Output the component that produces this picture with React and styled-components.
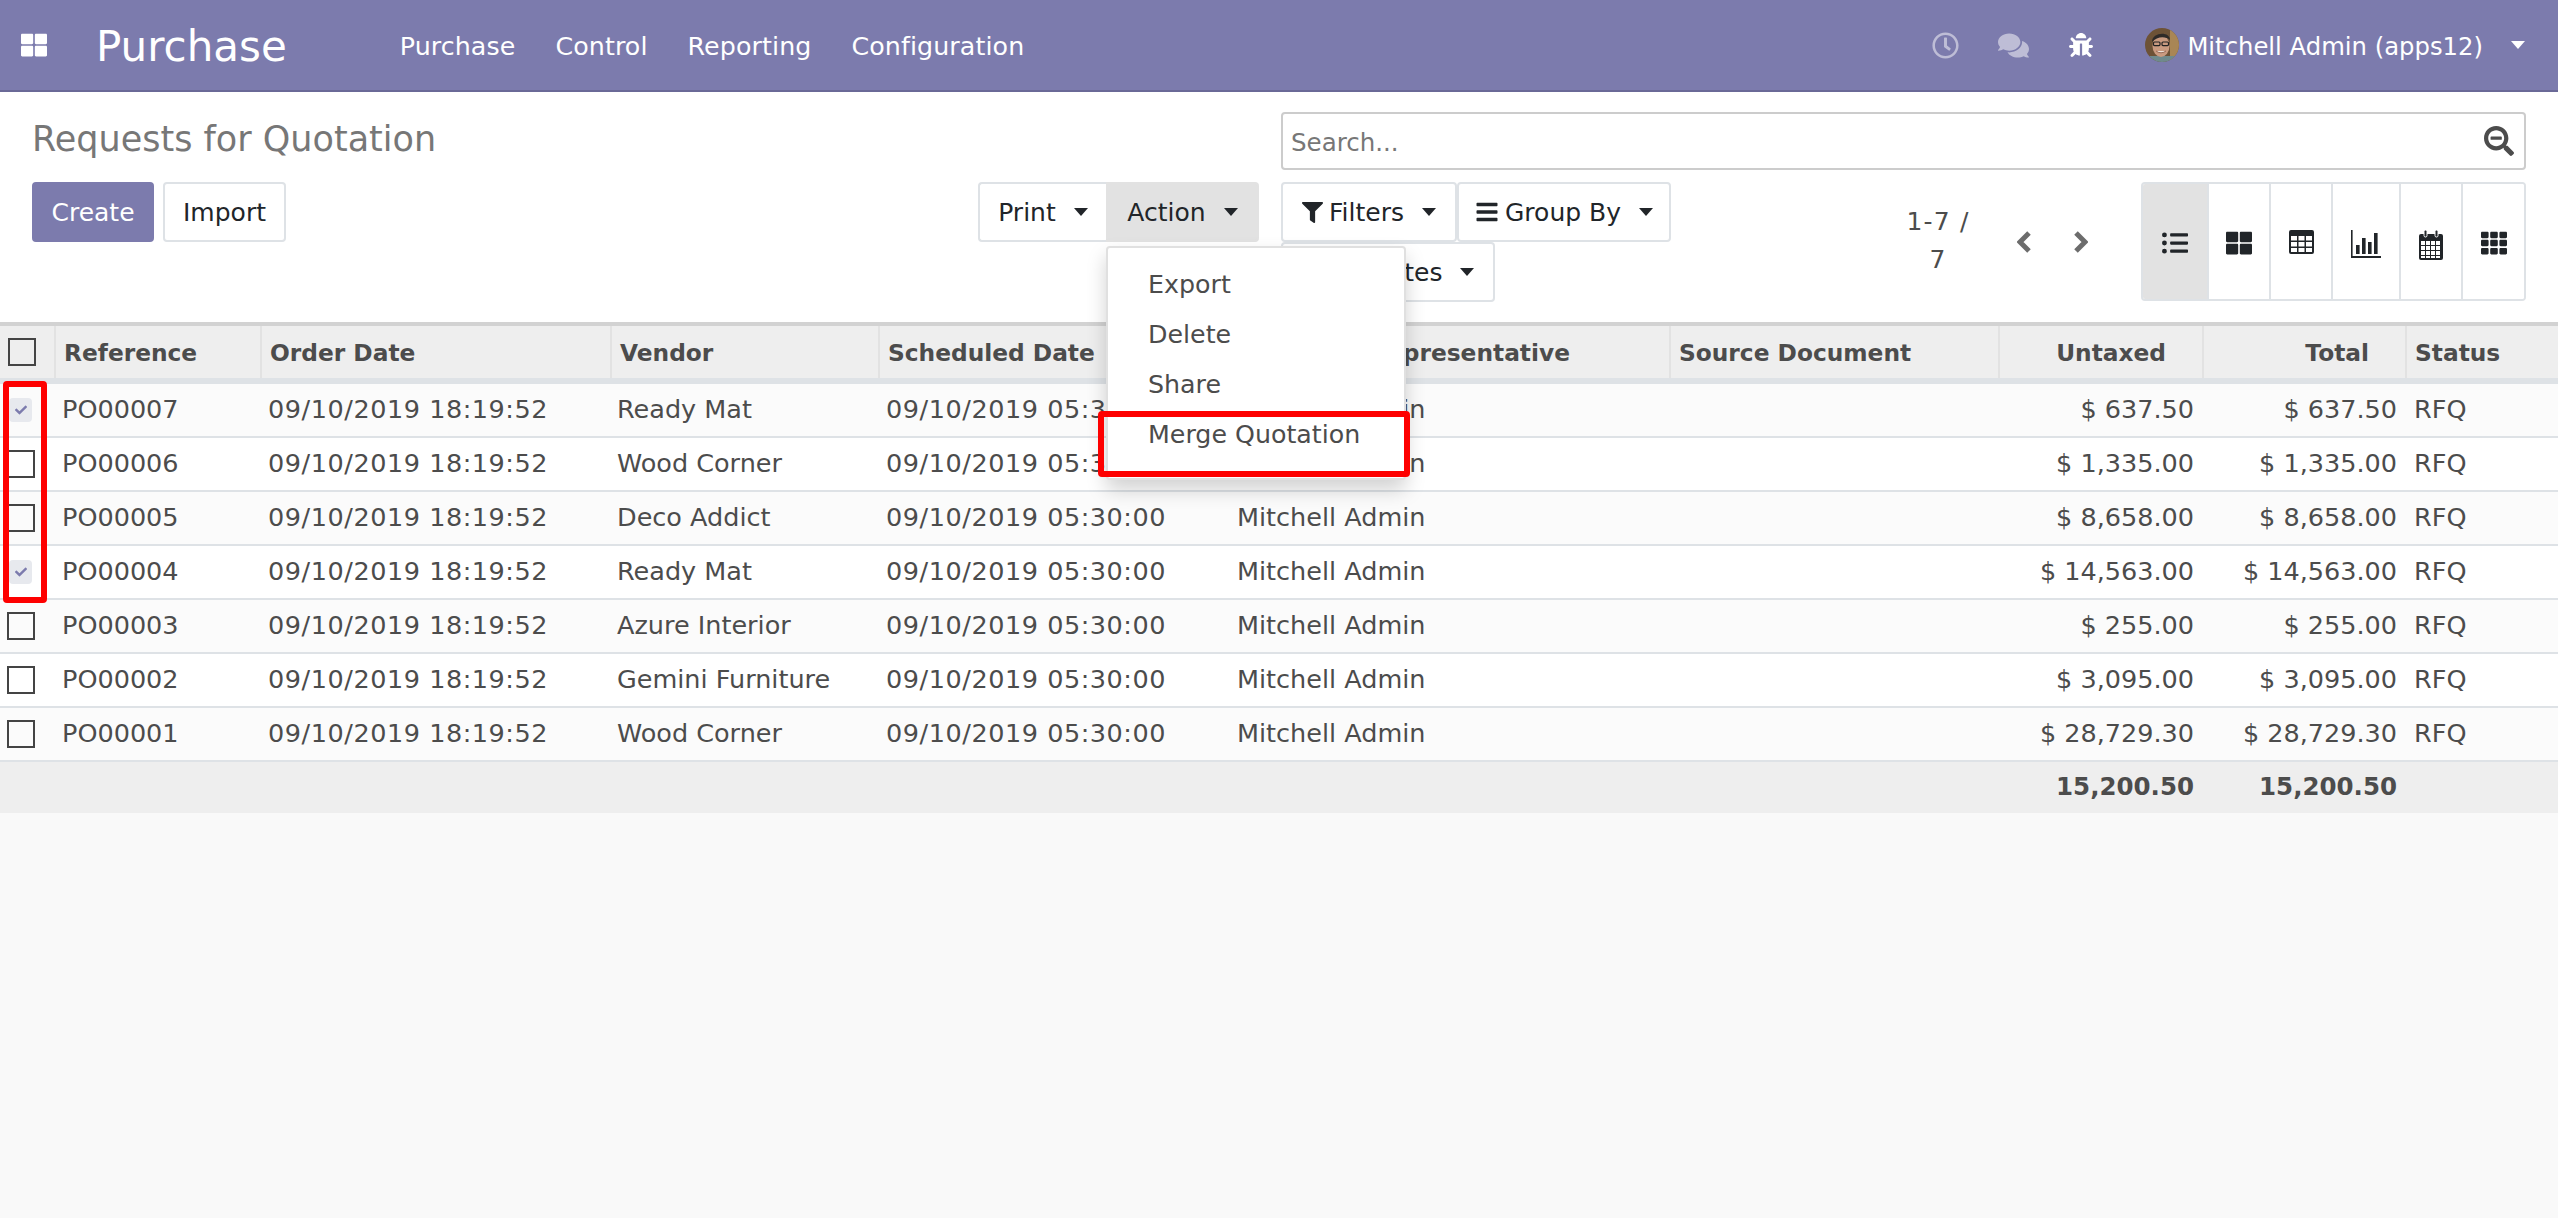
import React from 'react';
import styled, { createGlobalStyle } from 'styled-components';
import { FaThLarge, FaRegClock, FaComments, FaBug, FaFilter, FaBars, FaListUl, FaTh, FaSearchMinus, FaCheck, FaStar } from 'react-icons/fa';

const Global = createGlobalStyle`
    html, body {
        margin: 0;
        height: 100%;
        overflow: hidden;
        background: #f9f9f9;
        font-family: "DejaVu Sans", sans-serif;
        color: #4c4c4c;
    }
`;

const Page = styled.div`
    min-height: 1218px;
    background: #f9f9f9;
`;

const Navbar = styled.header`
    height: 92px;
    box-sizing: border-box;
    background: #7c7bad;
    border-bottom: 2px solid #6a6997;
    display: flex;
    align-items: center;
    padding: 0 33px 0 21px;
    color: #fff;
`;

const AppsIcon = styled(FaThLarge)`
    font-size: 26px;
    margin-right: 49px;
`;

const Brand = styled.div`
    font-size: 42px;
    margin-right: 113px;
    padding-top: 2px;
`;

const NavMenu = styled.nav`
    display: flex;
    gap: 40px;
    font-size: 25.3px;
    letter-spacing: 0.1px;
    padding-top: 2px;
`;

const NavRight = styled.div`
    margin-left: auto;
    display: flex;
    align-items: center;
`;

const NavIcon = styled.span`
    display: flex;
    font-size: ${p => p.$size}px;
    opacity: ${p => p.$dim ? 0.5 : 1};
    margin-right: ${p => p.$gap}px;
`;

const UserName = styled.span`
    font-size: 24.3px;
    margin-left: 8px;
    padding-top: 2px;
`;

const Caret = styled.span`
    display: inline-block;
    width: 0;
    height: 0;
    border-left: 7px solid transparent;
    border-right: 7px solid transparent;
    border-top: 8px solid ${p => p.$color || '#212529'};
    margin-left: ${p => p.$gap || 12}px;
    vertical-align: 4px;
`;

const ControlPanel = styled.section`
    height: 230px;
    box-sizing: border-box;
    background: #fff;
    padding: 20px 32px 0;
    display: grid;
    grid-template-columns: 1227px 1245px;
    grid-template-rows: 58px auto;
    column-gap: 22px;
    row-gap: 12px;
`;

const Title = styled.h1`
    margin: 0;
    font-size: 35px;
    font-weight: 400;
    color: #777;
    line-height: 58px;
    margin-top: -2px;
`;

const SearchBox = styled.div`
    box-sizing: border-box;
    height: 58px;
    border: 2px solid #ccc;
    border-radius: 4px;
    display: flex;
    align-items: center;
    justify-content: space-between;
    padding: 0 10px 0 8px;
    font-size: 24.5px;
    color: #777;
    & > span {
        padding-top: 2px;
    }
`;

const SearchIcon = styled(FaSearchMinus)`
    font-size: 30px;
    color: #4c4c4c;
`;

const LeftTools = styled.div`
    display: flex;
    justify-content: space-between;
    align-items: flex-start;
`;

const ButtonRow = styled.div`
    display: flex;
    gap: 9px;
`;

const Button = styled.button`
    box-sizing: border-box;
    height: 60px;
    width: ${p => p.$w}px;
    padding: 0;
    font: inherit;
    font-size: 25px;
    border-radius: 4px;
    color: ${p => p.$primary ? '#fff' : '#212529'};
    background: ${p => p.$primary ? '#7c7bad' : p.$active ? '#e2e2e2' : '#fff'};
    border: 2px solid ${p => p.$primary ? '#7c7bad' : p.$active ? '#e2e2e2' : '#dee2e6'};
    display: flex;
    align-items: center;
    justify-content: center;
    gap: 6px;
`;

const ActionGroup = styled.div`
    position: relative;
    display: flex;
    & > button:first-child {
        border-radius: 4px 0 0 4px;
        border-right: 0;
    }
    & > button:nth-child(2) {
        border-radius: 0 4px 4px 0;
    }
`;

const Dropdown = styled.ul`
    position: absolute;
    z-index: 5;
    top: 64px;
    left: 128px;
    width: 300px;
    box-sizing: border-box;
    margin: 0;
    padding: 12px 0 18px;
    list-style: none;
    background: #fff;
    border: 2px solid rgba(0, 0, 0, 0.12);
    border-radius: 4px;
    box-shadow: 0 10px 20px rgba(0, 0, 0, 0.18);
    font-size: 25.3px;
`;

const DropdownItem = styled.li`
    height: 50px;
    line-height: 50px;
    padding-left: 40px;
    color: #4c4c4c;
`;

const RedBox = styled.div`
    position: absolute;
    z-index: 6;
    box-sizing: border-box;
    border: 6px solid #fe0000;
    border-radius: 4px;
    pointer-events: none;
`;

const MergeMark = styled(RedBox)`
    left: -10px;
    top: 163px;
    width: 312px;
    height: 66px;
`;

const CheckMark = styled(RedBox)`
    left: 3px;
    top: 381px;
    width: 44px;
    height: 222px;
`;

const RightTools = styled.div`
    display: flex;
    align-items: flex-start;
`;

const FilterWrap = styled.div`
    width: 390px;
    display: flex;
    flex-wrap: wrap;
`;

const Pager = styled.div`
    width: 80px;
    margin-left: 227px;
    margin-top: 21px;
    text-align: center;
    font-size: 25px;
    letter-spacing: 1.2px;
    line-height: 38px;
`;

const PagerArrows = styled.div`
    display: flex;
    gap: 41px;
    margin-left: 39px;
    margin-top: 48px;
`;

const Switcher = styled.div`
    margin-left: auto;
    height: 119px;
    box-sizing: border-box;
    display: flex;
    border: 2px solid #dee2e6;
    border-radius: 4px;
    overflow: hidden;
`;

const ViewButton = styled.div`
    width: ${p => p.$w}px;
    box-sizing: border-box;
    display: flex;
    justify-content: center;
    padding-top: 46px;
    font-size: 26px;
    color: #212529;
    background: ${p => p.$active ? '#e2e2e2' : '#fff'};
    border-left: ${p => p.$active ? 0 : 2}px solid #dee2e6;
`;

const TableWrap = styled.div`
    position: relative;
`;

const COLUMNS = '56px 206px 350px 268px 352px 439px 329px 204px 203px 151px';

const Row = styled.div`
    display: grid;
    grid-template-columns: ${COLUMNS};
    height: 54px;
    box-sizing: border-box;
    align-items: center;
    font-size: 25.5px;
    background: ${p => p.$striped ? '#fbfbfb' : '#fff'};
    border-bottom: 2px solid #dee2e6;
`;

const HeadRow = styled(Row)`
    height: 62px;
    background: #eee;
    border-top: 4px solid #d2d2d2;
    border-bottom: 6px solid #dee2e6;
    align-items: stretch;
    font-weight: 700;
    font-size: 23.3px;
`;

const FootRow = styled(Row)`
    height: 51px;
    background: #eee;
    border-bottom: 0;
    font-weight: 700;
    font-size: 24.5px;
`;

const Cell = styled.div`
    white-space: nowrap;
    overflow: hidden;
    padding-left: ${p => p.$left || 7}px;
    padding-right: ${p => p.$right || 10}px;
    padding-bottom: 3px;
    text-align: ${p => p.$end ? 'right' : 'left'};
    letter-spacing: ${p => p.$track || 0}px;
`;

const HeadCell = styled(Cell)`
    display: flex;
    align-items: center;
    justify-content: ${p => p.$end ? 'flex-end' : 'flex-start'};
    padding-right: ${p => p.$end ? 36 : 8}px;
    padding-left: 8px;
    padding-bottom: 0;
    border-right: 2px solid #e2e2e2;
    &:last-child {
        border-right: 0;
    }
`;

const BoxCell = styled.div`
    display: flex;
    align-items: center;
    padding-left: ${p => p.$left}px;
    border-right: ${p => p.$divider ? '2px solid #e2e2e2' : 0};
`;

const CheckBox = styled.span`
    box-sizing: border-box;
    width: 28px;
    height: 28px;
    border: 2px solid #444;
`;

const CheckedBox = styled.span`
    width: 23px;
    height: 24px;
    margin-left: 2px;
    border-radius: 4px;
    background: #e7e9ee;
    color: #7c7bad;
    font-size: 12px;
    display: flex;
    align-items: center;
    justify-content: center;
`;

const Avatar = () => (
    <svg width="34" height="34" viewBox="0 0 34 34">
        <defs>
            <clipPath id="avatar-clip"><circle cx="17" cy="17" r="17" /></clipPath>
        </defs>
        <g clipPath="url(#avatar-clip)">
            <rect width="34" height="34" fill="#6d5236" />
            <rect x="25" width="9" height="34" fill="#a98655" />
            <rect y="28" width="34" height="6" fill="#6f8a8c" />
            <ellipse cx="16" cy="18" rx="8.5" ry="11" fill="#c99a80" />
            <path d="M7 14 C7 4 25 3 25 12 C21 8 12 8 7 14 Z" fill="#2e2a28" />
            <rect x="8.5" y="14" width="6.5" height="3.6" rx="1" fill="none" stroke="#222" strokeWidth="1.2" />
            <rect x="17" y="14" width="6.5" height="3.6" rx="1" fill="none" stroke="#222" strokeWidth="1.2" />
            <path d="M11 23 Q16 26.5 21 23" fill="#efe4da" stroke="#7a4a38" strokeWidth="0.7" />
        </g>
    </svg>
);

const ChevronIcon = ({ flip }) => (
    <svg width="15" height="24" viewBox="0 0 15 24">
        <polyline points={flip ? '3,3 12,12 3,21' : '12,3 3,12 12,21'} fill="none" stroke="#6c6c6c" strokeWidth="5" />
    </svg>
);

const TableIcon = () => (
    <svg width="25" height="24" viewBox="0 0 25 24" fill="#212529">
        <path fillRule="evenodd" d="M2 0h21a2 2 0 0 1 2 2v20a2 2 0 0 1-2 2H2a2 2 0 0 1-2-2V2a2 2 0 0 1 2-2ZM2 6v4.5h6V6Zm7.5 0v4.5h6V6ZM17 6v4.5h6V6ZM2 12v4.5h6V12Zm7.5 0v4.5h6V12ZM17 12v4.5h6V12ZM2 18v4h6v-4Zm7.5 0v4h6v-4ZM17 18v4h6v-4Z" />
    </svg>
);

const ChartIcon = () => (
    <svg width="30" height="28" viewBox="0 0 30 28" fill="#212529">
        <rect x="0" y="0" width="1.6" height="28" />
        <rect x="0" y="26" width="30" height="2" />
        <rect x="5" y="15" width="3.6" height="9" />
        <rect x="11" y="8" width="3.6" height="16" />
        <rect x="17" y="12" width="3.6" height="12" />
        <rect x="23" y="3" width="3.6" height="21" />
    </svg>
);

const CalendarIcon = () => (
    <svg width="24" height="30" viewBox="0 0 24 30">
        <rect x="0" y="4" width="24" height="26" rx="2" fill="#212529" />
        <rect x="5" y="0" width="3" height="7" rx="1.5" fill="#212529" stroke="#fff" strokeWidth="1" />
        <rect x="16" y="0" width="3" height="7" rx="1.5" fill="#212529" stroke="#fff" strokeWidth="1" />
        <g fill="#fff">
            {[11, 16, 21].map(y => [2, 7, 12, 17].map(x => <rect key={`${x}-${y}`} x={x} y={y} width="4" height="4" />))}
            <rect x="2" y="26" width="4" height="2" />
            <rect x="7" y="26" width="4" height="2" />
            <rect x="12" y="26" width="4" height="2" />
            <rect x="17" y="26" width="4" height="2" />
        </g>
    </svg>
);

const orders = [
    { ref: 'PO00007', vendor: 'Ready Mat', amount: '$ 637.50', checked: true },
    { ref: 'PO00006', vendor: 'Wood Corner', amount: '$ 1,335.00' },
    { ref: 'PO00005', vendor: 'Deco Addict', amount: '$ 8,658.00' },
    { ref: 'PO00004', vendor: 'Ready Mat', amount: '$ 14,563.00', checked: true },
    { ref: 'PO00003', vendor: 'Azure Interior', amount: '$ 255.00' },
    { ref: 'PO00002', vendor: 'Gemini Furniture', amount: '$ 3,095.00' },
    { ref: 'PO00001', vendor: 'Wood Corner', amount: '$ 28,729.30' },
];

const App = () => {
    const headers = ['Reference', 'Order Date', 'Vendor', 'Scheduled Date', 'Purchase Representative', 'Source Document'];

    return (
        <Page>
            <Global />
            <Navbar>
                <AppsIcon />
                <Brand>Purchase</Brand>
                <NavMenu>
                    <span>Purchase</span>
                    <span>Control</span>
                    <span>Reporting</span>
                    <span>Configuration</span>
                </NavMenu>
                <NavRight>
                    <NavIcon $size={27} $gap={39} $dim><FaRegClock /></NavIcon>
                    <NavIcon $size={31} $gap={40} $dim><FaComments /></NavIcon>
                    <NavIcon $size={24} $gap={52}><FaBug /></NavIcon>
                    <Avatar />
                    <UserName>Mitchell Admin (apps12)</UserName>
                    <Caret $color="#fff" $gap={28} />
                </NavRight>
            </Navbar>

            <ControlPanel>
                <Title>Requests for Quotation</Title>
                <SearchBox>
                    <span>Search...</span>
                    <SearchIcon />
                </SearchBox>
                <LeftTools>
                    <ButtonRow>
                        <Button $primary $w={122}>Create</Button>
                        <Button $w={123}>Import</Button>
                    </ButtonRow>
                    <ActionGroup>
                        <Button $w={128}>Print<Caret /></Button>
                        <Button $w={153} $active>Action<Caret /></Button>
                        <Dropdown>
                            <DropdownItem>Export</DropdownItem>
                            <DropdownItem>Delete</DropdownItem>
                            <DropdownItem>Share</DropdownItem>
                            <DropdownItem>Merge Quotation</DropdownItem>
                            <MergeMark />
                        </Dropdown>
                    </ActionGroup>
                </LeftTools>
                <RightTools>
                    <FilterWrap>
                        <Button $w={176}><FaFilter size={21} />Filters<Caret /></Button>
                        <Button $w={214}><FaBars size={24} />Group By<Caret /></Button>
                        <Button $w={214}><FaStar size={22} />Favorites<Caret /></Button>
                    </FilterWrap>
                    <Pager>1-7 / 7</Pager>
                    <PagerArrows>
                        <ChevronIcon />
                        <ChevronIcon flip />
                    </PagerArrows>
                    <Switcher>
                        <ViewButton $w={64} $active><FaListUl /></ViewButton>
                        <ViewButton $w={62}><FaThLarge /></ViewButton>
                        <ViewButton $w={62}><TableIcon /></ViewButton>
                        <ViewButton $w={68}><ChartIcon /></ViewButton>
                        <ViewButton $w={62}><CalendarIcon /></ViewButton>
                        <ViewButton $w={63}><FaTh /></ViewButton>
                    </Switcher>
                </RightTools>
            </ControlPanel>

            <TableWrap>
                <HeadRow>
                    <BoxCell $left={8} $divider><CheckBox /></BoxCell>
                    {headers.map(h => <HeadCell key={h}>{h}</HeadCell>)}
                    <HeadCell $end>Untaxed</HeadCell>
                    <HeadCell $end>Total</HeadCell>
                    <HeadCell>Status</HeadCell>
                </HeadRow>
                {orders.map((o, i) => (
                    <Row key={o.ref} $striped={i % 2 === 0}>
                        <BoxCell $left={7}>{o.checked ? <CheckedBox><FaCheck /></CheckedBox> : <CheckBox />}</BoxCell>
                        <Cell $left={6}>{o.ref}</Cell>
                        <Cell $left={6} $track={0.55}>09/10/2019 18:19:52</Cell>
                        <Cell $left={5}>{o.vendor}</Cell>
                        <Cell $left={6} $track={0.55}>09/10/2019 05:30:00</Cell>
                        <Cell $left={5}>Mitchell Admin</Cell>
                        <Cell />
                        <Cell $end>{o.amount}</Cell>
                        <Cell $end>{o.amount}</Cell>
                        <Cell>RFQ</Cell>
                    </Row>
                ))}
                <FootRow>
                    <Cell /><Cell /><Cell /><Cell /><Cell /><Cell /><Cell />
                    <Cell $end>15,200.50</Cell>
                    <Cell $end>15,200.50</Cell>
                    <Cell />
                </FootRow>
            </TableWrap>
            <CheckMark />
        </Page>
    );
};

export default App;
